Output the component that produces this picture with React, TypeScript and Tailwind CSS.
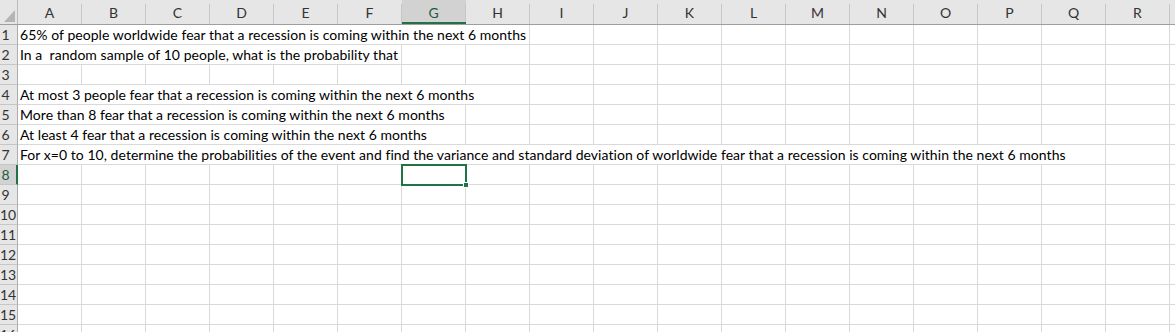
import React from "react";

const COLS = ["A","B","C","D","E","F","G","H","I","J","K","L","M","N","O","P","Q","R"];

const rows: { text?: string; span?: number }[] = [
  { text: "65% of people worldwide fear that a recession is coming within the next 6 months", span: 8 },
  { text: "In a  random sample of 10 people, what is the probability that", span: 6 },
  {},
  { text: "At most 3 people fear that a recession is coming within the next 6 months", span: 8 },
  { text: "More than 8 fear that a recession is coming within the next 6 months", span: 7 },
  { text: "At least 4 fear that a recession is coming within the next 6 months", span: 7 },
  { text: "For x=0 to 10, determine the probabilities of the event and find the variance and standard deviation of worldwide fear that a recession is coming within the next 6 months", span: 17 },
  {}, {}, {}, {}, {}, {}, {}, {}, {},
];

const font = { fontFamily: "Lato, 'Open Sans', sans-serif" };

export default function App() {
  return (
    <div className="w-[1175px] h-[332px] overflow-hidden bg-white text-black" style={font}>
      {/* header */}
      <div className="flex h-[25px] bg-[#e6e6e6] border-b border-[#9e9e9e]">
        <div className="relative w-[18px] shrink-0 border-r border-[#bcbcbc]">
          <svg className="absolute left-0 top-0" width="17" height="24" viewBox="0 0 17 24">
            <polygon points="4,22 15,22 15,10" fill="#b4b4b4" />
          </svg>
        </div>
        {COLS.map((c) => (
          <div
            key={c}
            className={`relative w-[64px] shrink-0 flex flex-col justify-end ${c === "G" ? "bg-[#d2d2d2]" : ""}`}
          >
            <div className={`h-[20px] border-r border-[#c6c6c6] flex items-center justify-center text-[14px] leading-none ${c === "G" ? "text-[#1e5c3b]" : "text-[#333]"}`}>
              <span className="-mt-[3px]">{c}</span>
            </div>
            {c === "G" && <div className="absolute left-0 right-0 bottom-0 h-[2px] bg-[#217346]" />}
          </div>
        ))}
        <div className="flex-1" />
      </div>
      {rows.map((r, i) => {
        const n = i + 1;
        const sel = n === 8;
        const span = r.span ?? 0;
        const rest = COLS.slice(span === 0 ? 0 : span);
        return (
          <div key={n} className="flex h-[20px]">
            <div
              className={`w-[18px] shrink-0 overflow-hidden border-b border-[#c6c6c6] ${sel ? "bg-[#d2d2d2] border-r-2 border-r-[#217346]" : "bg-[#e6e6e6] border-r border-r-[#ababab]"}`}
            >
              <div className={`w-[11px] text-center text-[14px] leading-[19px] ${sel ? "text-[#1e5c3b]" : "text-[#333]"}`}>{n}</div>
            </div>
            {span > 0 && (
              <div
                className="shrink-0 border-r border-b border-[#d9d9d9] pl-[2px] whitespace-pre text-[14px] leading-[19px] tracking-[0.045px]"
                style={{ width: span * 64 }}
              >
                {r.text}
              </div>
            )}
            {rest.map((c) => (
              <div key={c} className="relative w-[64px] shrink-0 border-r border-b border-[#d9d9d9]">
                {sel && c === "G" && (
                  <div className="absolute -left-[1px] -top-[1px] w-[66px] h-[22px] border-2 border-[#217346] z-10">
                    <div className="absolute -right-[4px] -bottom-[4px] w-[6px] h-[6px] bg-[#217346] border border-white" />
                  </div>
                )}
              </div>
            ))}
            <div className="flex-1 border-b border-[#d9d9d9]" />
          </div>
        );
      })}
    </div>
  );
}
